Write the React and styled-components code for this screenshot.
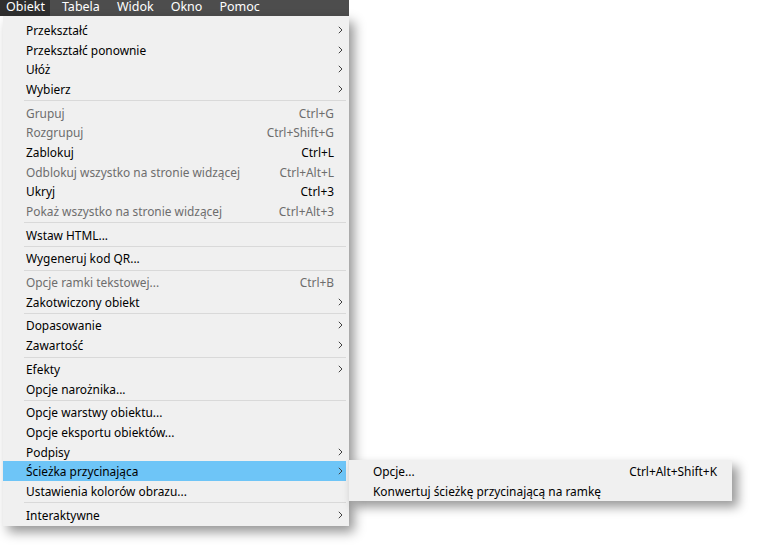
import React from 'react'
import styled, { createGlobalStyle } from 'styled-components'

const Global = createGlobalStyle`
  body {
    margin: 0;
    background: #ffffff;
    font-family: "Noto Sans", "Open Sans", sans-serif;
  }
`

const Screen = styled.div`
  width: 770px;
  height: 554px;
  overflow: hidden;
`

const MenuBar = styled.div`
  display: flex;
  width: 349px;
  height: 16px;
  background: #4d4d4d;
  color: #ffffff;
  font-size: 12.5px;
`

const BarItem = styled.div`
  padding: 0 5px 0 6px;
  margin-right: 6px;
  line-height: 13px;
  background: ${p => (p.active ? '#2f2f2f' : 'transparent')};
`

const Panel = styled.div`
  position: relative;
  width: 346px;
  margin-left: 3px;
  padding: 4px 0 1px;
  background: #f0f0f0;
  box-shadow: 5px 6px 11px rgba(0, 0, 0, 0.42);
  font-size: 11.9px;
`

const Row = styled.div`
  position: relative;
  display: grid;
  grid-template-columns: 1fr auto 12px;
  align-items: center;
  height: 19.7px;
  padding-left: 23px;
  margin-right: 3px;
  color: ${p => (p.disabled ? '#6d6d6d' : '#000000')};
  background: ${p => (p.active ? '#6ec5f7' : 'transparent')};
`

const Label = styled.span`
  white-space: nowrap;
`

const Shortcut = styled.span`
  white-space: nowrap;
`

const Arrow = styled.span`
  display: flex;
  justify-content: center;
`

const Separator = styled.div`
  height: 1px;
  margin: 1.5px 3px 1.5px 21px;
  background: #d9d9d9;
`

const Submenu = styled.div`
  position: absolute;
  top: -1px;
  left: calc(100% + 2px);
  width: 383px;
  padding-top: 1px;
  background: #f0f0f0;
  border-left: 1px solid #e2e2e2;
  box-shadow: 6px 6px 10px rgba(0, 0, 0, 0.4);
`

const SubRow = styled.div`
  display: grid;
  grid-template-columns: 1fr auto;
  align-items: center;
  height: 19.7px;
  padding: 0 15px 0 24px;
  color: #000000;
`

const Chevron = () => (
  <svg width="5" height="8" viewBox="0 0 5 8">
    <path d="M0.8 0.8 L4 4 L0.8 7.2" fill="none" stroke="#404040" strokeWidth="1" />
  </svg>
)

const groups = [
  [
    { label: 'Przekształć', sub: true },
    { label: 'Przekształć ponownie', sub: true },
    { label: 'Ułóż', sub: true },
    { label: 'Wybierz', sub: true },
  ],
  [
    { label: 'Grupuj', shortcut: 'Ctrl+G', disabled: true },
    { label: 'Rozgrupuj', shortcut: 'Ctrl+Shift+G', disabled: true },
    { label: 'Zablokuj', shortcut: 'Ctrl+L' },
    { label: 'Odblokuj wszystko na stronie widzącej', shortcut: 'Ctrl+Alt+L', disabled: true },
    { label: 'Ukryj', shortcut: 'Ctrl+3' },
    { label: 'Pokaż wszystko na stronie widzącej', shortcut: 'Ctrl+Alt+3', disabled: true },
  ],
  [{ label: 'Wstaw HTML...' }],
  [{ label: 'Wygeneruj kod QR...' }],
  [
    { label: 'Opcje ramki tekstowej...', shortcut: 'Ctrl+B', disabled: true },
    { label: 'Zakotwiczony obiekt', sub: true },
  ],
  [
    { label: 'Dopasowanie', sub: true },
    { label: 'Zawartość', sub: true },
  ],
  [
    { label: 'Efekty', sub: true },
    { label: 'Opcje narożnika...' },
  ],
  [
    { label: 'Opcje warstwy obiektu...' },
    { label: 'Opcje eksportu obiektów...' },
    { label: 'Podpisy', sub: true },
    { label: 'Ścieżka przycinająca', sub: true, active: true },
    { label: 'Ustawienia kolorów obrazu...' },
  ],
  [{ label: 'Interaktywne', sub: true }],
]

const clippingItems = [
  { label: 'Opcje...', shortcut: 'Ctrl+Alt+Shift+K' },
  { label: 'Konwertuj ścieżkę przycinającą na ramkę' },
]

const App = () => (
  <Screen>
    <Global />
    <MenuBar>
      <BarItem active>Obiekt</BarItem>
      <BarItem>Tabela</BarItem>
      <BarItem>Widok</BarItem>
      <BarItem>Okno</BarItem>
      <BarItem>Pomoc</BarItem>
    </MenuBar>
    <Panel>
      {groups.map((group, gi) => (
        <React.Fragment key={gi}>
          {gi > 0 && <Separator />}
          {group.map(item => (
            <Row key={item.label} disabled={item.disabled} active={item.active}>
              <Label>{item.label}</Label>
              <Shortcut>{item.shortcut}</Shortcut>
              <Arrow>{item.sub && <Chevron />}</Arrow>
              {item.active && (
                <Submenu>
                  {clippingItems.map(s => (
                    <SubRow key={s.label}>
                      <Label>{s.label}</Label>
                      <Shortcut>{s.shortcut}</Shortcut>
                    </SubRow>
                  ))}
                </Submenu>
              )}
            </Row>
          ))}
        </React.Fragment>
      ))}
    </Panel>
  </Screen>
)

export default App
